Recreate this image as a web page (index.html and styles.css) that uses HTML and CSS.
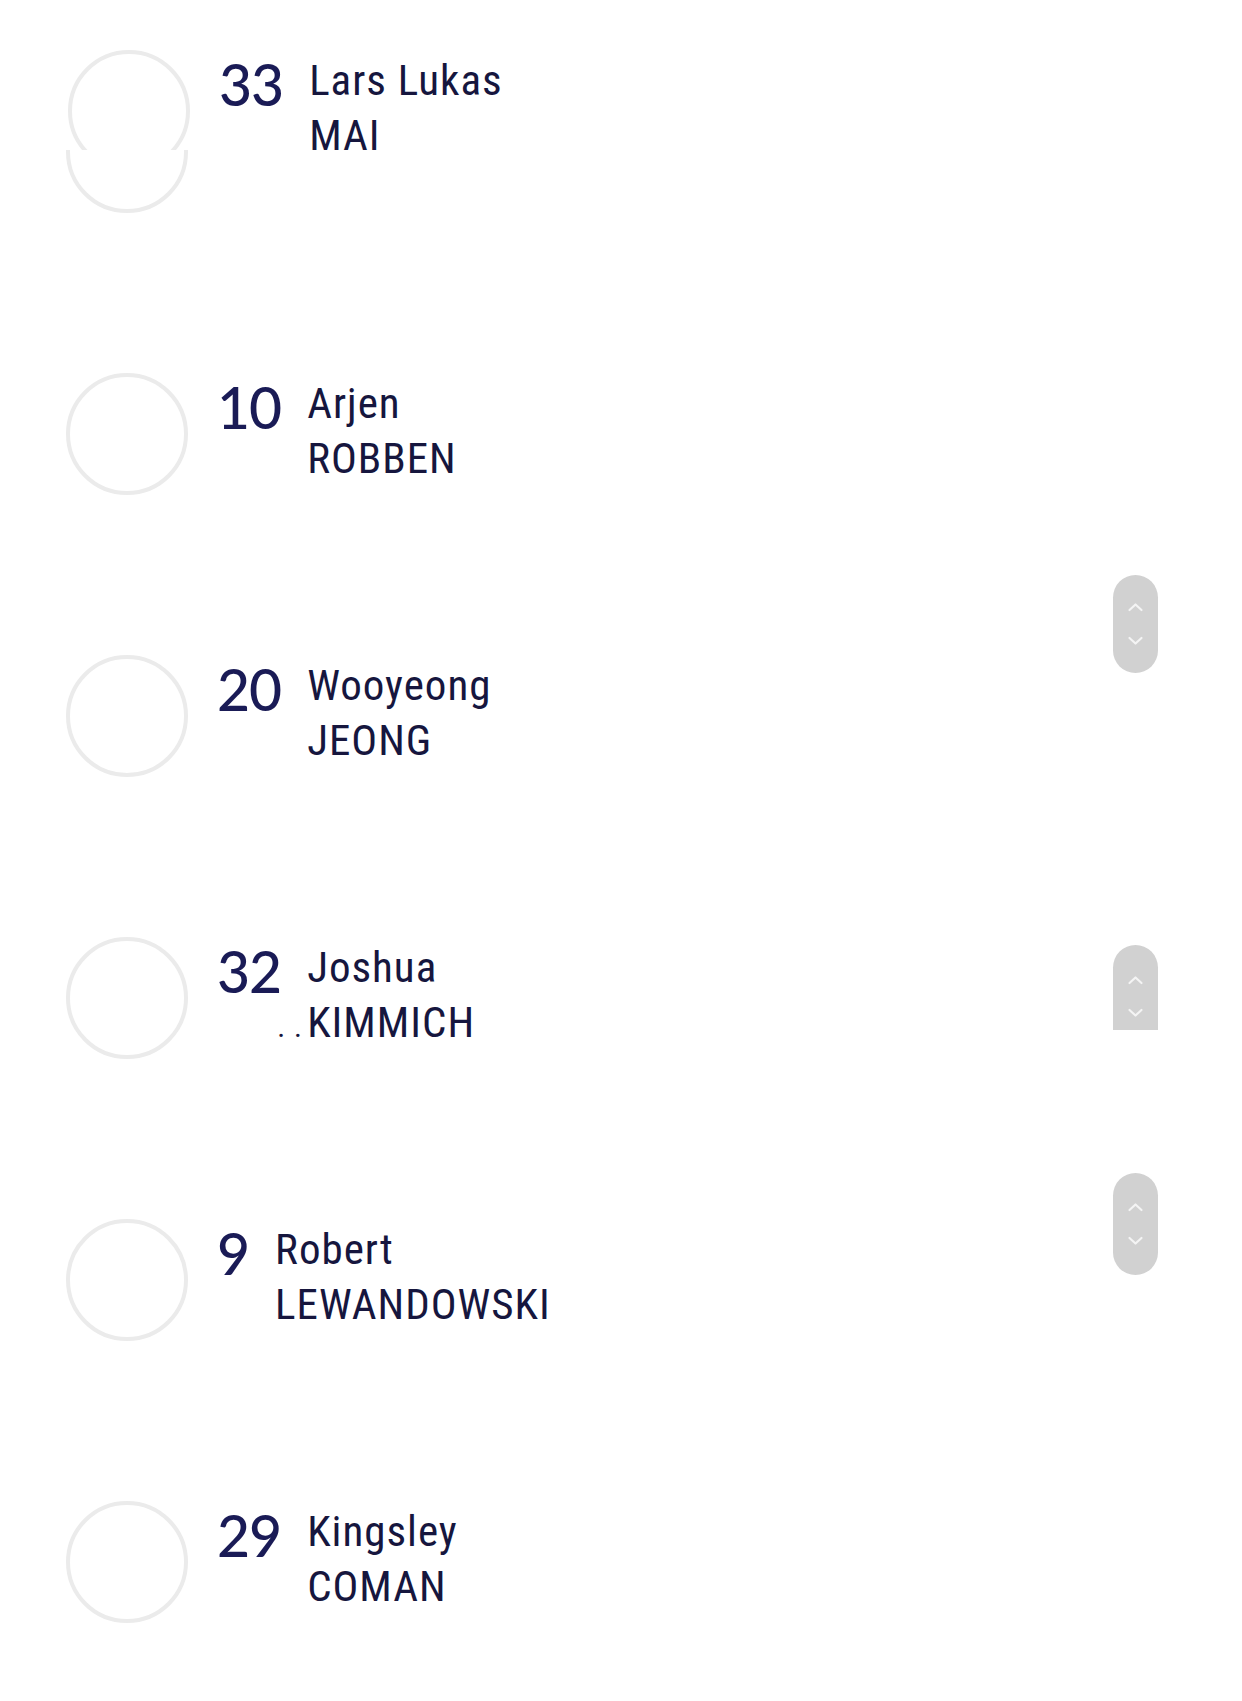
FILE: index.html
```html
<!DOCTYPE html>
<html lang="en">
<head>
<meta charset="utf-8">
<title>Squad</title>
<link rel="stylesheet" href="styles.css">
</head>
<body>
<main class="squad">
  <div class="row">
    <div class="avatar avatar-split">
      <div class="split-top"><div class="ring"></div></div>
      <div class="split-bottom"><div class="ring"></div></div>
    </div>
    <div class="num">33</div>
    <div class="name"><div>Lars Lukas</div><div>MAI</div></div>
  </div>
  <div class="row">
    <div class="avatar ring"></div>
    <div class="num">10</div>
    <div class="name"><div>Arjen</div><div>ROBBEN</div></div>
  </div>
  <div class="row">
    <div class="avatar ring"></div>
    <div class="num">20</div>
    <div class="name"><div>Wooyeong</div><div>JEONG</div></div>
  </div>
  <div class="row">
    <div class="avatar ring"></div>
    <div class="num">32</div>
    <div class="name"><div>Joshua</div><div class="clipped"><span class="dots">..</span>KIMMICH</div></div>
  </div>
  <div class="row">
    <div class="avatar ring"></div>
    <div class="num">9</div>
    <div class="name"><div>Robert</div><div>LEWANDOWSKI</div></div>
  </div>
  <div class="row">
    <div class="avatar ring"></div>
    <div class="num">29</div>
    <div class="name"><div>Kingsley</div><div>COMAN</div></div>
  </div>
</main>

<div class="thumb thumb-1">
  <svg viewBox="0 0 45 98" width="45" height="98"><polyline points="16.5,35 22.5,29.5 28.5,35" class="chev"/><polyline points="16.5,63 22.5,68.5 28.5,63" class="chev"/></svg>
</div>
<div class="thumb thumb-2">
  <svg viewBox="0 0 45 85" width="45" height="85"><polyline points="16.5,38 22.5,32.5 28.5,38" class="chev"/><polyline points="16.5,65 22.5,70.5 28.5,65" class="chev"/></svg>
</div>
<div class="thumb thumb-3">
  <svg viewBox="0 0 45 102" width="45" height="102"><polyline points="16.5,37 22.5,31.5 28.5,37" class="chev"/><polyline points="16.5,65 22.5,70.5 28.5,65" class="chev"/></svg>
</div>
</body>
</html>
```

FILE: styles.css
```css
html, body {
  margin: 0;
  padding: 0;
  background: #ffffff;
}

body {
  position: relative;
  width: 1242px;
  min-height: 1701px;
  overflow: hidden;
}

.squad {
  display: flex;
  flex-direction: column;
  gap: 160px;
  padding: 50px 0 0 66px;
}

.row {
  display: flex;
  align-items: flex-start;
}

.ring {
  box-sizing: border-box;
  width: 122px;
  height: 122px;
  border: 4px solid #ebebeb;
  border-radius: 50%;
  flex: none;
}

.avatar-split {
  width: 124px;
  height: 163px;
  flex: none;
  display: flex;
  flex-direction: column;
}

.split-top {
  height: 100px;
  overflow: hidden;
  padding-left: 2px;
}

.split-bottom {
  height: 63px;
  overflow: hidden;
  display: flex;
  flex-direction: column;
  justify-content: flex-end;
}

.num {
  font-family: "Lato", "Open Sans", sans-serif;
  font-size: 57px;
  font-weight: 500;
  line-height: 58px;
  letter-spacing: -1px;
  color: #1a1b56;
  margin-left: 29px;
  margin-top: 5px;
  flex: none;
}

.name {
  font-family: "Roboto", "Liberation Sans", sans-serif;
  font-size: 43px;
  font-stretch: 87.5%;
  line-height: 55px;
  letter-spacing: 1px;
  color: #16163e;
  margin-left: 26px;
  margin-top: 3px;
}

.clipped {
  height: 42px;
  overflow: hidden;
  margin-left: -30px;
}

.dots {
  display: inline-block;
  width: 30px;
  font-size: 30px;
  letter-spacing: 9px;
}

.thumb {
  position: absolute;
  left: 1113px;
  width: 45px;
  background: #d1d1d1;
  border-radius: 23px;
}

.thumb svg {
  display: block;
}

.chev {
  fill: none;
  stroke: #f4f4f4;
  stroke-width: 2.2;
  stroke-linecap: round;
  stroke-linejoin: round;
}

.thumb-1 {
  top: 575px;
  height: 98px;
}

.thumb-2 {
  top: 945px;
  height: 85px;
  border-radius: 23px 23px 0 0;
}

.thumb-3 {
  top: 1173px;
  height: 102px;
}
```
